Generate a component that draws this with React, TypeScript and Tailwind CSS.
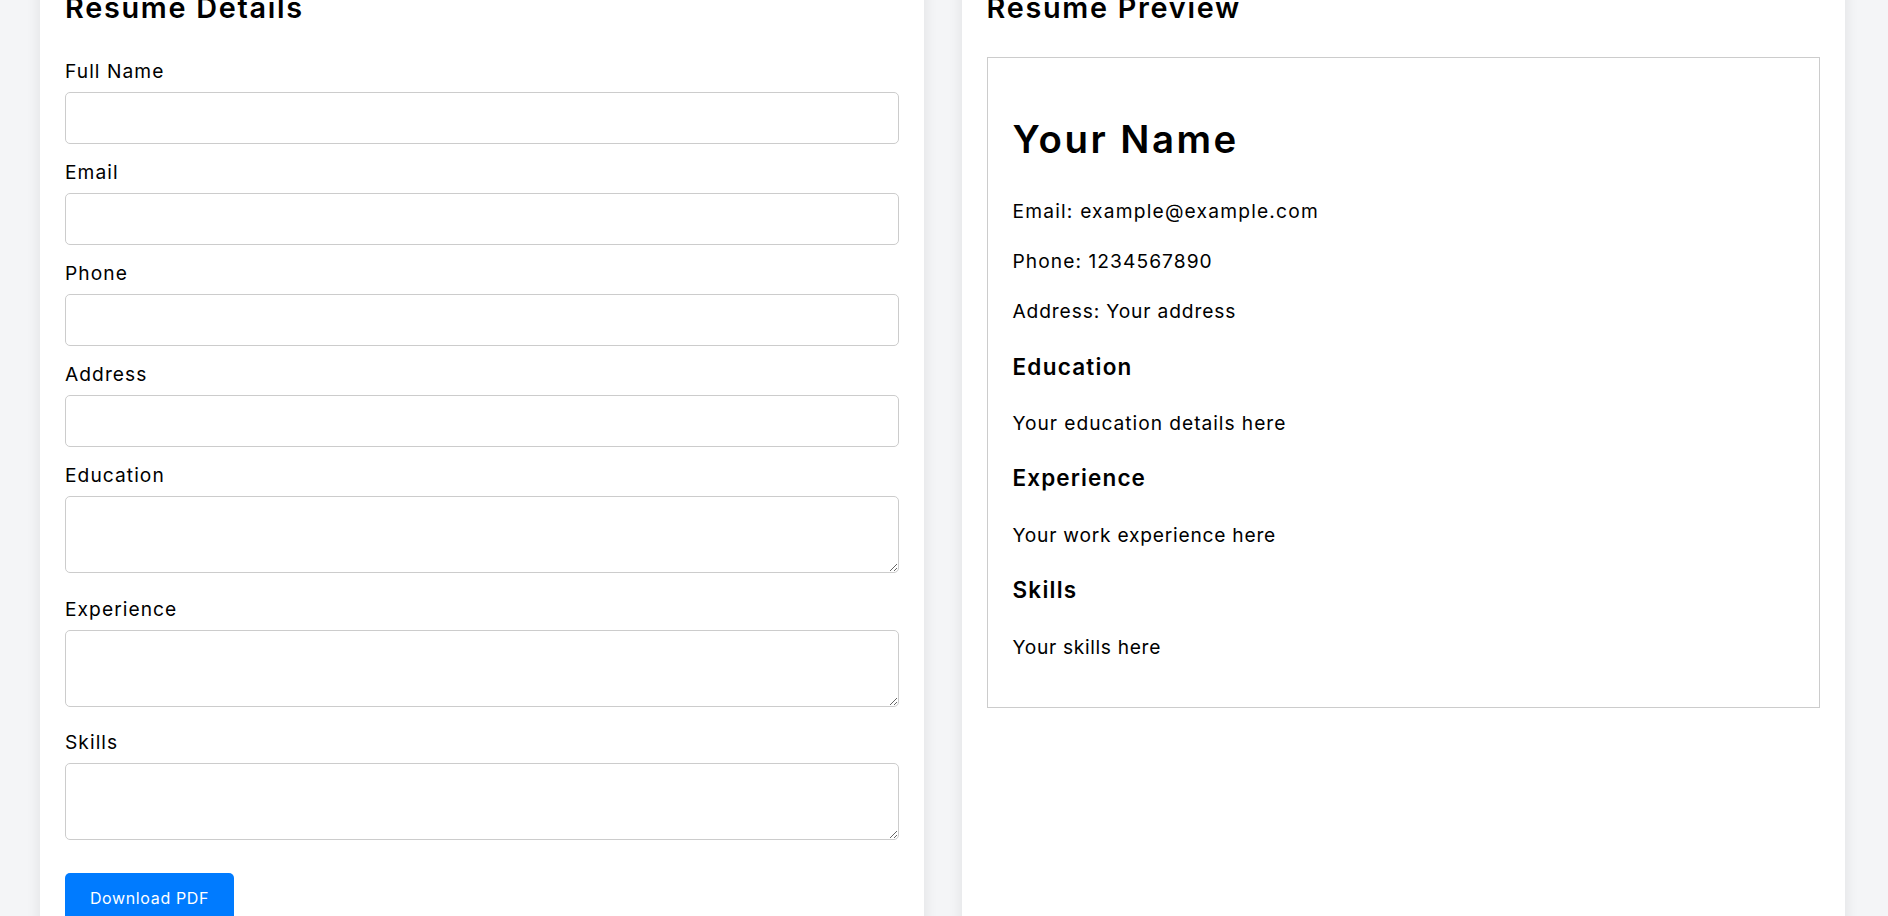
import React from "react";

const font = { fontFamily: 'Inter, "Noto Sans", sans-serif' };

function Field({ label, area, last }: { label: string; area?: boolean; last?: boolean }) {
  return (
    <div className={area ? (last ? "mb-[33px]" : "mb-[21.5px]") : "mb-[14px]"}>
      <label className="block text-[19.2px] leading-[28px] tracking-[0.055em] text-black mb-[7px]">{label}</label>
      {area ? (
        <textarea className="block w-full h-[77px] border border-[#cccccc] rounded-[5px] bg-white outline-none" />
      ) : (
        <input type="text" className="block w-full h-[52px] border border-[#cccccc] rounded-[5px] bg-white outline-none" />
      )}
    </div>
  );
}

export default function App() {
  return (
    <div className="h-screen overflow-hidden bg-[#f4f5f7] text-black" style={font}>
      <div className="flex gap-[38px] pl-[40px] pr-[43px] -mt-[40px]">
        <div className="flex-1 bg-white shadow-[0_0_14px_rgba(0,0,0,0.09)] px-[25px] pt-[29.5px] pb-[40px]">
          <h2 className="text-[28.8px] leading-[35px] font-semibold tracking-[0.06em] mb-[32.8px]">Resume Details</h2>
          <Field label="Full Name" />
          <Field label="Email" />
          <Field label="Phone" />
          <Field label="Address" />
          <Field label="Education" area />
          <Field label="Experience" area />
          <Field label="Skills" area last />
          <button className="w-[169px] h-[50px] bg-[#007bff] text-white text-[16px] tracking-[0.04em] rounded-[5px]">
            Download PDF
          </button>
        </div>
        <div className="flex-1 bg-white shadow-[0_0_14px_rgba(0,0,0,0.09)] px-[25px] pt-[29.5px] pb-[40px]">
          <h2 className="text-[28.8px] leading-[35px] font-semibold tracking-[0.06em] mb-[32.5px]">Resume Preview</h2>
          <div className="border border-[#cccccc] px-[25px] pb-[45.5px]">
            <h1 className="text-[38.4px] leading-[46px] font-semibold tracking-[0.065em] mt-[58.3px]">Your Name</h1>
            <p className="text-[19.2px] leading-[30px] tracking-[0.062em] mt-[33.7px]">Email: example@example.com</p>
            <p className="text-[19.2px] leading-[30px] tracking-[0.055em] mt-[19.7px]">Phone: 1234567890</p>
            <p className="text-[19.2px] leading-[30px] tracking-[0.045em] mt-[20.3px]">Address: Your address</p>
            <h3 className="text-[22.5px] leading-[28px] font-semibold tracking-[0.055em] mt-[26.8px]">Education</h3>
            <p className="text-[19.2px] leading-[30px] tracking-[0.05em] mt-[27.2px]">Your education details here</p>
            <h3 className="text-[22.5px] leading-[28px] font-semibold tracking-[0.05em] mt-[26.5px]">Experience</h3>
            <p className="text-[19.2px] leading-[30px] tracking-[0.04em] mt-[27.2px]">Your work experience here</p>
            <h3 className="text-[22.5px] leading-[28px] font-semibold tracking-[0.055em] mt-[26.6px]">Skills</h3>
            <p className="text-[19.2px] leading-[30px] tracking-[0.035em] mt-[27.4px]">Your skills here</p>
          </div>
        </div>
      </div>
    </div>
  );
}
